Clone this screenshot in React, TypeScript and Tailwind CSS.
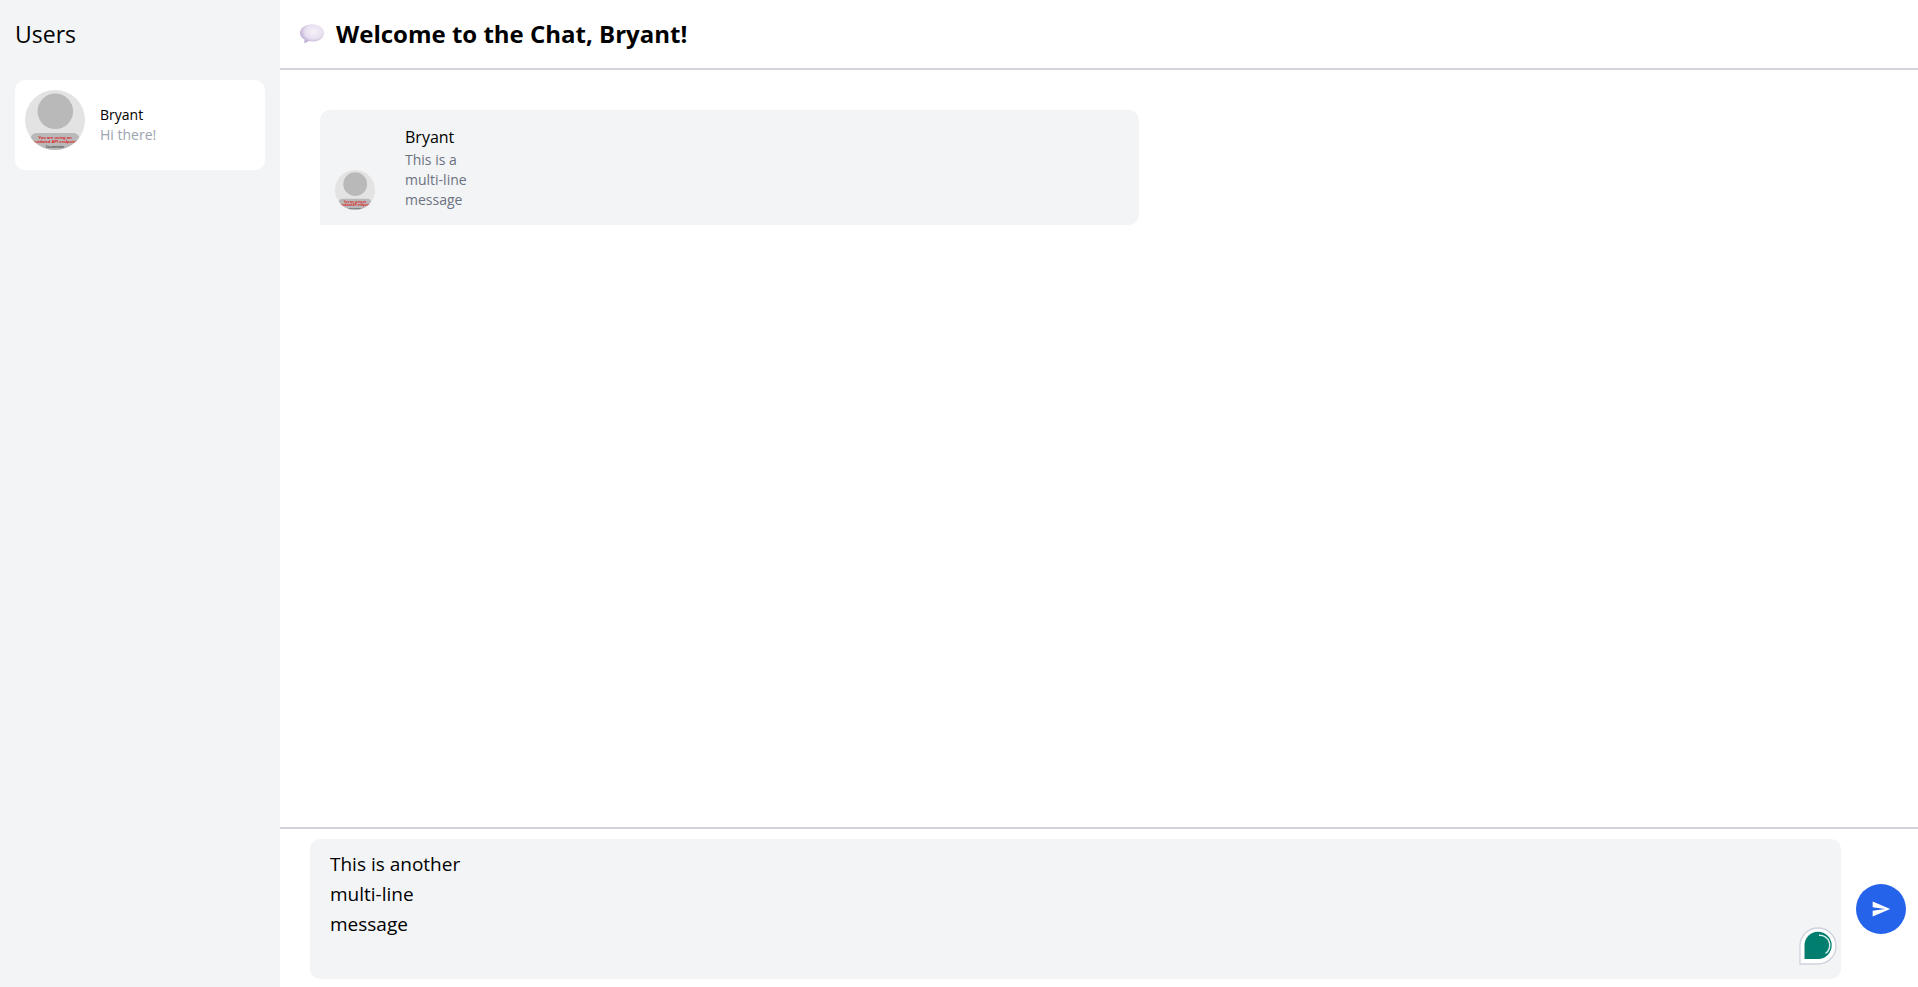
import { useState } from "react";
import { MdSend } from "react-icons/md";

function Avatar({ className }: { className: string }) {
  return (
    <svg viewBox="0 0 60 60" className={className} role="img" aria-label="Bryant's avatar">
      <defs>
        <clipPath id="avatar-circle">
          <circle cx="30" cy="30" r="30" />
        </clipPath>
      </defs>
      <g clipPath="url(#avatar-circle)">
        <rect width="60" height="60" fill="#e3e3e3" />
        <circle cx="30.3" cy="21.3" r="17.8" fill="#b9b9b9" />
        <rect x="5.5" y="43" width="49" height="30" rx="6" fill="#b9b9b9" />
        <g fontFamily="Liberation Sans, sans-serif" textAnchor="middle">
          <text x="30" y="48.8" fontSize="4.2" fontWeight="700" fill="#dc1c24">You are using an</text>
          <text x="30" y="53.3" fontSize="4.2" fontWeight="700" fill="#dc1c24">outdated API endpoint</text>
          <text x="30" y="58" fontSize="2.7" fill="#222222">Documentation</text>
        </g>
      </g>
    </svg>
  );
}

function SpeechBubble() {
  return (
    <svg viewBox="0 0 24 20" className="h-5 w-6 shrink-0" aria-hidden="true">
      <defs>
        <radialGradient id="bubble-fill" cx="0.58" cy="0.4" r="0.62">
          <stop offset="0" stopColor="#f6f1f9" />
          <stop offset="0.6" stopColor="#e8e0f0" />
          <stop offset="1" stopColor="#b9a8d2" />
        </radialGradient>
      </defs>
      <path
        d="M12.2.2C18.8.2 24 4 24 8.900c0 5-5.200 8.600-11.800 8.600-1.300 0-2.500-.1-3.600-.4-1.200.9-2.700 1.700-4.400 1.900.4-1.200.5-2.400.3-3.500C1.800 14 0 11.700 0 8.900 0 4 5.500.2 12.200.2z"
        fill="url(#bubble-fill)"
      />
    </svg>
  );
}

function AssistantBadge() {
  return (
    <svg viewBox="0 0 38 38" className="absolute right-1 bottom-[14px] size-[38px]" aria-hidden="true">
      <path d="M1 37V19A18 18 0 1 1 19 37z" fill="#ffffff" stroke="#cfd2de" strokeWidth="1.300" />
      <path d="M5.500 32V18.500A13.600 13.600 0 1 1 19.200 32z" fill="#027e6f" />
      <path d="M20 8.300A10 10 0 0 1 26.500 26.500" fill="none" stroke="#d5ece8" strokeWidth="1.500" />
    </svg>
  );
}

export default function App() {
  const [draft, setDraft] = useState("This is another\nmulti-line\nmessage");

  return (
    <div className="flex h-screen bg-white font-['Open_Sans','Noto_Sans',sans-serif] text-black">
      <aside className="w-[280px] shrink-0 bg-[#f3f4f6] px-[15px]">
        <h2 className="flex h-[68px] items-center text-[23px]">Users</h2>
        <ul className="mt-3">
          <li className="flex rounded-[10px] bg-white p-[10px]">
            <Avatar className="size-[60px]" />
            <div className="ml-[15px] flex h-[70px] flex-col justify-center text-sm leading-5">
              <p>Bryant</p>
              <p className="text-[#9ca3af]">Hi there!</p>
            </div>
          </li>
        </ul>
      </aside>

      <main className="flex min-w-0 flex-1 flex-col">
        <header className="flex h-[70px] shrink-0 items-center gap-3 border-b-2 border-[#d1d5db] px-5">
          <SpeechBubble />
          <h1 className="text-2xl font-bold">Welcome to the Chat, Bryant!</h1>
        </header>

        <section className="flex-1 overflow-auto pt-10" aria-label="Messages">
          <article className="ml-10 flex w-1/2 items-end rounded-[10px] rounded-bl-none bg-[#f3f4f6] p-[15px]">
            <Avatar className="size-10" />
            <div className="ml-[30px]">
              <h3 className="text-base leading-[25px]">Bryant</h3>
              <p className="whitespace-pre-line text-sm leading-5 text-[#6b7280]">
                {"This is a\nmulti-line\nmessage"}
              </p>
            </div>
          </article>
        </section>

        <form
          className="flex shrink-0 items-center gap-[15px] border-t-2 border-[#d1d5db] pt-[10px] pr-3 pb-2 pl-[30px]"
          onSubmit={(event) => event.preventDefault()}
        >
          <div className="relative flex-1">
            <textarea
              aria-label="Message"
              className="block h-[140px] w-full resize-none rounded-[10px] bg-[#f3f4f6] px-5 py-[10px] text-[19px] leading-[30px] outline-none"
              value={draft}
              onChange={(event) => setDraft(event.target.value)}
            />
            <AssistantBadge />
          </div>
          <button
            type="submit"
            aria-label="Send message"
            className="flex size-[50px] shrink-0 items-center justify-center rounded-full bg-[#2563eb] text-white"
          >
            <MdSend className="size-5" />
          </button>
        </form>
      </main>
    </div>
  );
}
